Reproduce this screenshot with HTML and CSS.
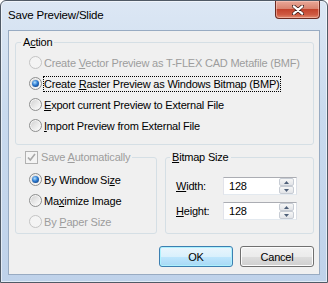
FILE: index.html
```html
<!DOCTYPE html>
<html lang="en">
<head>
    <meta charset="UTF-8">
    <title>Save Preview/Slide</title>
    <link rel="stylesheet" href="styles.css">
</head>
<body>
    <div class="window">
        <div class="titlebar">
            <span class="title">Save Preview/Slide</span>
            <span class="close">
                <svg width="12" height="10" viewBox="0 0 12 10">
                    <path d="M1.5 1 L10.5 9 M10.5 1 L1.5 9" stroke="#3a1a16" stroke-width="3.6" stroke-linecap="round"/>
                    <path d="M1.8 1.3 L10.2 8.7 M10.2 1.3 L1.8 8.7" stroke="#fff" stroke-width="2.2" stroke-linecap="round"/>
                </svg>
            </span>
        </div>

        <div class="client">
            <fieldset class="group action">
                <legend><span>A<u>c</u>tion</span></legend>
                <div class="opt disabled"><span class="radio"></span><span>Create <u>V</u>ector Preview as T-FLEX CAD Metafile (BMF)</span></div>
                <div class="opt"><span class="radio on"></span><span class="focus">Create <u>R</u>aster Preview as Windows Bitmap (BMP)</span></div>
                <div class="opt"><span class="radio"></span><span><u>E</u>xport current Preview to External File</span></div>
                <div class="opt"><span class="radio"></span><span><u>I</u>mport Preview from External File</span></div>
            </fieldset>

            <div class="lower">
                <fieldset class="group auto">
                    <legend class="disabled">
                        <span class="check">
                            <svg width="11" height="11" viewBox="0 0 11 11">
                                <path d="M2 5.5 L4.3 8 L9 2" fill="none" stroke="#a8a8a8" stroke-width="1.6"/>
                            </svg>
                        </span><span>Save <u>A</u>utomatically</span>
                    </legend>
                    <div class="opt"><span class="radio on"></span><span>By Window Si<u>z</u>e</span></div>
                    <div class="opt"><span class="radio"></span><span>Ma<u>x</u>imize Image</span></div>
                    <div class="opt disabled"><span class="radio"></span><span>By <u>P</u>aper Size</span></div>
                </fieldset>

                <fieldset class="group bitmap">
                    <legend><span><u>B</u>itmap Size</span></legend>
                    <div class="field">
                        <label><u>W</u>idth:</label>
                        <div class="spin-input">
                            <span class="value">128</span>
                            <span class="spin">
                                <span class="spin-btn"><svg width="5" height="3" viewBox="0 0 5 3"><path d="M0 3 L2.5 0 L5 3Z" fill="#4e5f78"/></svg></span>
                                <span class="spin-btn"><svg width="5" height="3" viewBox="0 0 5 3"><path d="M0 0 L2.5 3 L5 0Z" fill="#4e5f78"/></svg></span>
                            </span>
                        </div>
                    </div>
                    <div class="field">
                        <label><u>H</u>eight:</label>
                        <div class="spin-input">
                            <span class="value">128</span>
                            <span class="spin">
                                <span class="spin-btn"><svg width="5" height="3" viewBox="0 0 5 3"><path d="M0 3 L2.5 0 L5 3Z" fill="#4e5f78"/></svg></span>
                                <span class="spin-btn"><svg width="5" height="3" viewBox="0 0 5 3"><path d="M0 0 L2.5 3 L5 0Z" fill="#4e5f78"/></svg></span>
                            </span>
                        </div>
                    </div>
                </fieldset>
            </div>

            <div class="buttons">
                <button class="btn default">OK</button>
                <button class="btn">Cancel</button>
            </div>
        </div>
    </div>
</body>
</html>
```

FILE: styles.css
```css
body {
    margin: 0;
    font-family: "Segoe UI", "Liberation Sans", Arial, sans-serif;
    font-size: 11px;
    letter-spacing: -0.2px;
    color: #000;
    background: #fff;
}

u {
    text-underline-offset: 1px;
}

.window {
    width: 328px;
    height: 283px;
    box-sizing: border-box;
    border: 1px solid #505a66;
    border-radius: 6px 6px 0 0;
    background: linear-gradient(#dce7f4, #c9daee 40%, #bfd2ea);
    box-shadow: inset 0 0 0 1px rgba(255, 255, 255, 0.55);
}

.titlebar {
    height: 29px;
    display: flex;
    justify-content: space-between;
    align-items: flex-start;
    padding: 0 7px 0 7px;
}

.title {
    line-height: 29px;
    font-size: 11.5px;
}

.close {
    width: 45px;
    height: 18px;
    box-sizing: border-box;
    border: 1px solid #6a2a20;
    border-top: none;
    border-radius: 0 0 4px 4px;
    background: linear-gradient(#e9a898, #d98470 45%, #c3432c 50%, #cf5a42 80%, #e08b70);
    box-shadow: inset 0 0 0 1px rgba(255, 210, 200, 0.5);
    display: flex;
    align-items: center;
    justify-content: center;
}

.client {
    margin: 0 7px 7px;
    height: 245px;
    box-sizing: border-box;
    border: 1px solid #98abc2;
    background: #f0f0f0;
    padding: 4px 5px 0 6px;
}

.group {
    margin: 0;
    border: 1px solid #d5dfe5;
    border-radius: 3px;
    padding: 2px 0 8px 5px;
    min-width: 0;
}

legend {
    padding: 0 2px;
    height: 15px;
    line-height: 15px;
    display: flex;
    align-items: center;
    white-space: pre;
}

.opt {
    height: 21px;
    display: flex;
    align-items: center;
    padding-left: 8px;
    white-space: pre;
}

.disabled {
    color: #9d9d9d;
}

.radio {
    width: 13px;
    height: 13px;
    box-sizing: border-box;
    border-radius: 50%;
    border: 1px solid #8e8f8f;
    background: linear-gradient(135deg, #cfcfcf, #f6f6f6 80%);
    box-shadow: inset 0 0 0 1px #f4f4f4;
    margin-right: 2px;
    flex: none;
    position: relative;
}

.disabled .radio {
    border-color: #c4c4c4;
    background: #f4f4f4;
    box-shadow: none;
}

.radio.on::after {
    content: "";
    position: absolute;
    left: 2px;
    top: 2px;
    width: 7px;
    height: 7px;
    border-radius: 50%;
    background: radial-gradient(circle at 40% 35%, #b6e3ff, #2a79d0 45%, #0d3674 90%);
}

.focus {
    border: 1px dotted #000;
    margin-left: -1px;
    line-height: 14px;
}

.lower {
    display: flex;
    gap: 8px;
    margin-top: 5px;
}

.auto {
    width: 142px;
    box-sizing: border-box;
    padding: 4px 0 1px 5px;
}

.auto legend {
    padding-left: 4px;
}

.check {
    width: 13px;
    height: 13px;
    box-sizing: border-box;
    border: 1px solid #b1b1b1;
    background: #f4f4f4;
    margin-right: 3px;
    display: flex;
    align-items: center;
    justify-content: center;
}

.bitmap {
    flex: 1;
    padding: 12px 0 0 5px;
}

.bitmap legend {
    margin-left: -1px;
}

.field {
    display: flex;
    align-items: center;
    padding-left: 5px;
    margin-bottom: 7px;
}

.field label {
    width: 47px;
}

.spin-input {
    width: 74px;
    height: 18px;
    box-sizing: border-box;
    border: 1px solid;
    border-color: #abadb3 #dbdfe6 #e3e9ef #e2e3ea;
    background: #fff;
    display: flex;
    align-items: center;
}

.value {
    flex: 1;
    padding-left: 5px;
}

.spin {
    width: 15px;
    height: 16px;
    margin-right: 2px;
    display: flex;
    flex-direction: column;
}

.spin-btn {
    flex: 1;
    box-sizing: border-box;
    border: 1px solid #c7ccd4;
    border-radius: 2px;
    background: linear-gradient(#f6f6f6, #e2e4e8);
    display: flex;
    align-items: center;
    justify-content: center;
}

.buttons {
    display: flex;
    justify-content: flex-end;
    gap: 7px;
    margin-top: 12px;
}

.btn {
    width: 74px;
    height: 21px;
    padding: 0;
    font: inherit;
    letter-spacing: inherit;
    color: #000;
    border: 1px solid #707070;
    border-radius: 3px;
    background: linear-gradient(#f2f2f2, #ebebeb 50%, #dddddd 51%, #cfcfcf);
    box-shadow: inset 0 0 0 1px #fcfcfc;
}

.btn.default {
    border-color: #3c7fb1;
    background: linear-gradient(#eaf6fd, #d9f0fc 50%, #bee6fd 51%, #a7d9f5);
    box-shadow: inset 0 0 0 1px #aef1fd;
}
```
